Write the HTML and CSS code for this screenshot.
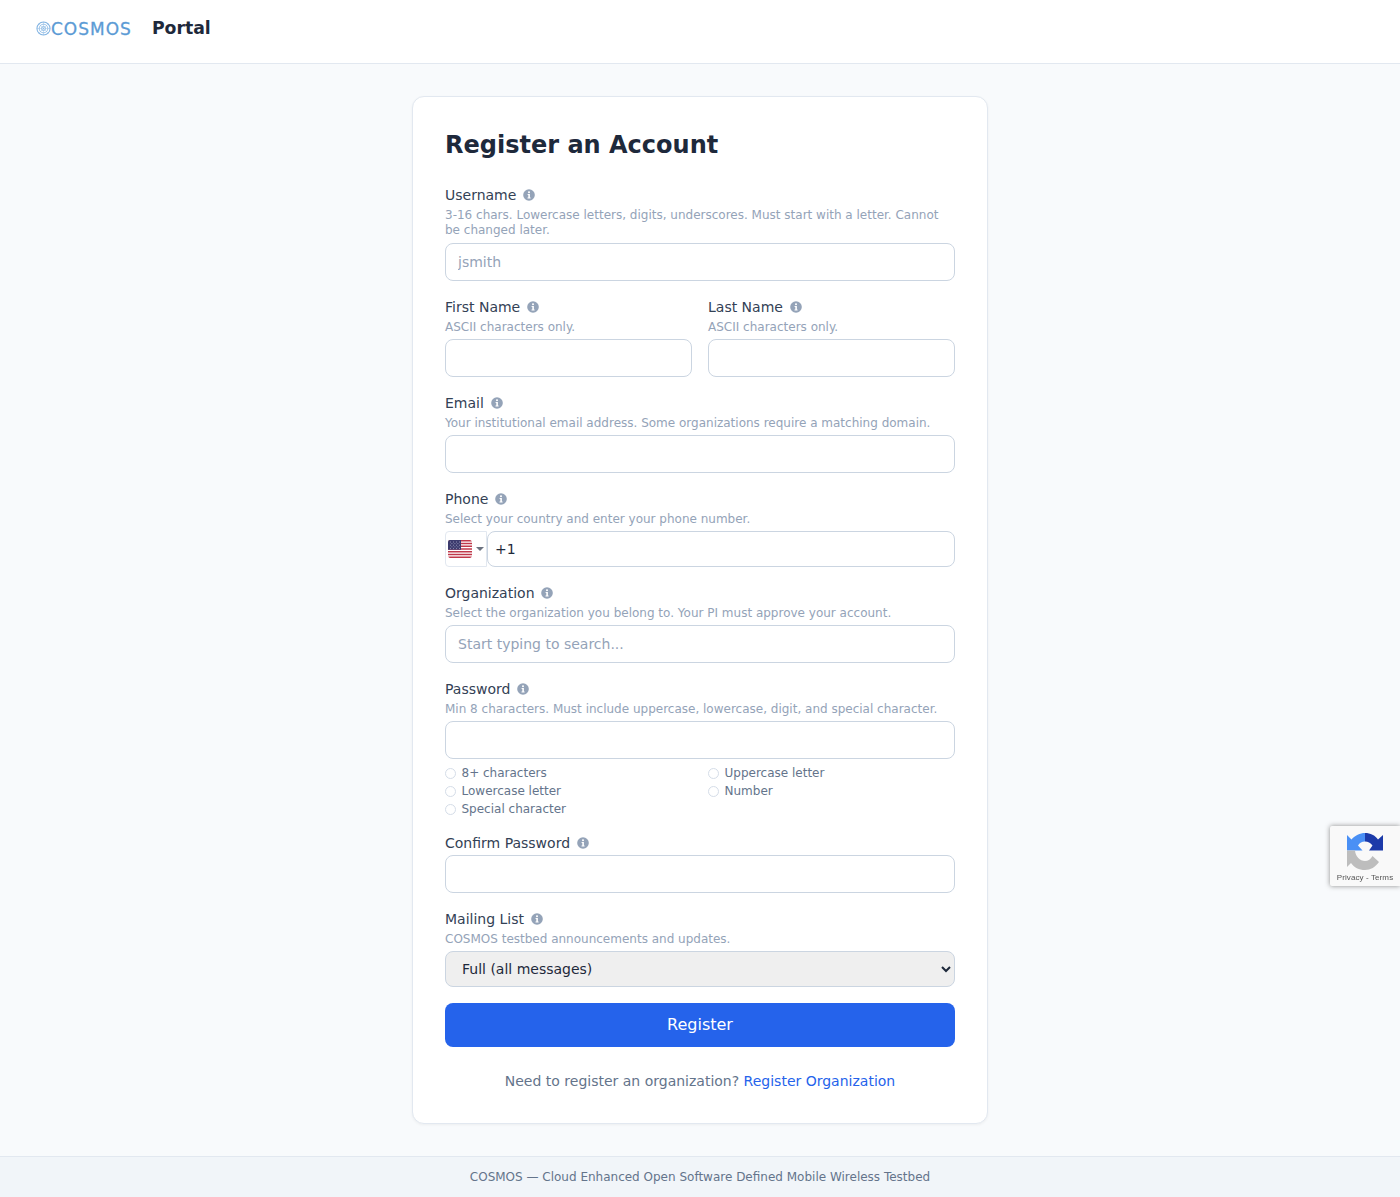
FILE: index.html
```html
<!DOCTYPE html>
<html>
<head>
    <title>COSMOS Portal - Register</title>
    <link rel="stylesheet" href="styles.css">
</head>
<body>
    <svg class="icon-defs" width="0" height="0">
        <symbol id="info" viewBox="0 0 12 12">
            <circle cx="6" cy="6" r="5.8" fill="#94a3b8" />
            <rect x="5.1" y="2.4" width="1.8" height="1.7" fill="#fff" />
            <path d="M4.6 5h2.3v3.5h.7v1H4.5v-1h.8V6h-.7z" fill="#fff" />
        </symbol>
    </svg>

    <nav class="navbar">
        <a class="brand" href="#">
            <svg class="brand-mark" viewBox="0 0 16 16" width="15" height="15" fill="none" stroke="#7fb2e2">
                <circle cx="8" cy="8" r="7" stroke-width="1.1" />
                <circle cx="8" cy="8" r="4.6" stroke-width=".8" />
                <circle cx="8" cy="8" r="2.2" stroke-width=".8" />
                <path d="M8 1v14M1 8h14M3 3l10 10M13 3L3 13" stroke-width=".4" />
            </svg>
            <span class="brand-text">COSMOS</span>
        </a>
        <span class="nav-title">Portal</span>
    </nav>

    <main class="page">
        <form class="card" id="registrationForm">
            <h1 class="card-title">Register an Account</h1>

            <div class="field">
                <label class="field-label">Username <svg class="info"><use href="#info" /></svg></label>
                <p class="hint hint-long">3-16 chars. Lowercase letters, digits, underscores. Must start with a letter. Cannot be changed later.</p>
                <input class="text-input" type="text" name="username" placeholder="jsmith">
            </div>

            <div class="field two-col">
                <div>
                    <label class="field-label">First Name <svg class="info"><use href="#info" /></svg></label>
                    <p class="hint">ASCII characters only.</p>
                    <input class="text-input" type="text" name="firstname">
                </div>
                <div>
                    <label class="field-label">Last Name <svg class="info"><use href="#info" /></svg></label>
                    <p class="hint">ASCII characters only.</p>
                    <input class="text-input" type="text" name="lastname">
                </div>
            </div>

            <div class="field">
                <label class="field-label">Email <svg class="info"><use href="#info" /></svg></label>
                <p class="hint">Your institutional email address. Some organizations require a matching domain.</p>
                <input class="text-input" type="email" name="email">
            </div>

            <div class="field">
                <label class="field-label">Phone <svg class="info"><use href="#info" /></svg></label>
                <p class="hint">Select your country and enter your phone number.</p>
                <div class="phone-row">
                    <div class="flag-button">
                        <svg class="flag" viewBox="0 0 24 18" width="24" height="18">
                            <rect width="24" height="18" rx="2" fill="#fff" />
                            <path d="M2 0h20a2 2 0 0 1 1.8 1.4H.2A2 2 0 0 1 2 0zM0 2.8h24v1.4H0zM0 5.5h24v1.4H0zM0 8.3h24v1.4H0zM0 11.1h24v1.4H0zM0 13.8h24v1.4H0zM.2 16.6h23.6A2 2 0 0 1 22 18H2a2 2 0 0 1-1.8-1.4z" fill="#c0394b" />
                            <path d="M2 0h11v9.7H0V2a2 2 0 0 1 2-2z" fill="#3c3b6e" />
                            <path d="M2 2h.8M5 2h.8M8 2h.8M11 2h.8M3.5 3.6h.8M6.5 3.6h.8M9.5 3.6h.8M2 5.2h.8M5 5.2h.8M8 5.2h.8M11 5.2h.8M3.5 6.8h.8M6.5 6.8h.8M9.5 6.8h.8M2 8.4h.8M5 8.4h.8M8 8.4h.8M11 8.4h.8" stroke="#b9bcd6" stroke-width=".8" />
                        </svg>
                        <span class="caret"></span>
                    </div>
                    <input class="text-input phone-input" type="tel" name="phone" value="+1">
                </div>
            </div>

            <div class="field">
                <label class="field-label">Organization <svg class="info"><use href="#info" /></svg></label>
                <p class="hint">Select the organization you belong to. Your PI must approve your account.</p>
                <input class="text-input" type="text" name="organization" placeholder="Start typing to search...">
            </div>

            <div class="field">
                <label class="field-label">Password <svg class="info"><use href="#info" /></svg></label>
                <p class="hint">Min 8 characters. Must include uppercase, lowercase, digit, and special character.</p>
                <input class="text-input" type="password" name="password">
                <ul class="rules">
                    <li>8+ characters</li>
                    <li>Uppercase letter</li>
                    <li>Lowercase letter</li>
                    <li>Number</li>
                    <li>Special character</li>
                </ul>
            </div>

            <div class="field">
                <label class="field-label">Confirm Password <svg class="info"><use href="#info" /></svg></label>
                <input class="text-input" type="password" name="confirm_password">
            </div>

            <div class="field">
                <label class="field-label">Mailing List <svg class="info"><use href="#info" /></svg></label>
                <p class="hint">COSMOS testbed announcements and updates.</p>
                <select class="select-input" name="mailing">
                    <option>Full (all messages)</option>
                    <option>Digest</option>
                    <option>None</option>
                </select>
            </div>

            <button class="submit-button" type="submit">Register</button>

            <p class="card-foot">Need to register an organization? <a href="#">Register Organization</a></p>
        </form>
    </main>

    <footer class="footer">COSMOS — Cloud Enhanced Open Software Defined Mobile Wireless Testbed</footer>

    <div class="recaptcha">
        <svg viewBox="0 0 40 40" width="40" height="40">
            <path d="M20 1V9.500C17 9.500 14.500 11 13 13.500L17.500 18.500H2V3L6.500 7.500C10 3.500 15 1 20 1Z" fill="#4a90f5" />
            <path d="M20 1C25.500 1 30 3.200 33 7.500L38 3V18.500H24L27.500 13.500C25.500 11 23 9.500 20 9.500Z" fill="#1c3aa9" />
            <path d="M2 18.500H10C10.500 24.500 15 29 20 29C23 29 26 27 27.500 24L34 30C30.500 35 25.500 38 20 38C14 38 9 35.500 6 31L2 35Z" fill="#bdbdbd" />
        </svg>
        <span class="recaptcha-links">Privacy - Terms</span>
    </div>
</body>
</html>
```

FILE: styles.css
```css
* {
    box-sizing: border-box;
}

html,
body {
    height: 100%;
}

body {
    margin: 0;
    display: flex;
    flex-direction: column;
    background: #f8fafc;
    color: #1e293b;
    font-family: "DejaVu Sans", sans-serif;
    font-size: 14px;
}

.icon-defs {
    position: absolute;
}

.navbar {
    display: flex;
    align-items: center;
    gap: 20px;
    height: 64px;
    padding: 0 36px 8px;
    background: #fff;
    border-bottom: 1px solid #e2e8f0;
}

.brand {
    display: flex;
    align-items: center;
    text-decoration: none;
    margin-top: 2px;
}

.brand-text {
    color: #5b9bd5;
    font-size: 17px;
    line-height: 20px;
    letter-spacing: 1px;
    -webkit-text-stroke: 0.3px #5b9bd5;
}

.nav-title {
    font-size: 17.3px;
    font-weight: 700;
    color: #1e293b;
}

.page {
    flex: 1;
    display: flex;
    justify-content: center;
    align-items: flex-start;
    padding: 32px 0;
}

.card {
    width: 576px;
    padding: 32px;
    background: #fff;
    border: 1px solid #e2e8f0;
    border-radius: 12px;
    box-shadow: 0 1px 3px rgba(0, 0, 0, 0.05);
}

.card-title {
    margin: 0 0 24px;
    font-size: 24px;
    line-height: 32px;
    font-weight: 700;
    color: #1e293b;
}

.field {
    margin-bottom: 16px;
}

.two-col {
    display: grid;
    grid-template-columns: 1fr 1fr;
    gap: 16px;
}

.field-label {
    display: block;
    margin-bottom: 2px;
    font-size: 14px;
    line-height: 20px;
    color: #334155;
}

.info {
    width: 12px;
    height: 12px;
    margin-left: 2.500px;
    vertical-align: -1px;
}

.hint {
    margin: 0 0 3.400px;
    padding-top: 1px;
    font-size: 12px;
    line-height: 15.600px;
    color: #94a3b8;
}

.hint-long {
    margin-bottom: 5.500px;
    padding-top: 0.500px;
    line-height: 15px;
}

.text-input {
    display: block;
    width: 100%;
    height: 38px;
    padding: 0 12px;
    border: 1px solid #cbd5e1;
    border-radius: 8px;
    background: #fff;
    color: #1e293b;
    font-family: inherit;
    font-size: 14px;
}

.text-input::placeholder {
    color: #94a3b8;
}

.phone-row {
    display: flex;
}

.flag-button {
    display: flex;
    align-items: center;
    gap: 4px;
    width: 42px;
    height: 36px;
    padding-left: 2px;
    border: 1px solid #e2e8f0;
    border-radius: 4px 0 0 4px;
}

.caret {
    width: 0;
    height: 0;
    border-left: 4px solid transparent;
    border-right: 4px solid transparent;
    border-top: 4px solid #6b7280;
}

.phone-input {
    flex: 1;
    height: 36px;
    padding-left: 7px;
}

.rules {
    display: grid;
    grid-template-columns: 1fr 1fr;
    column-gap: 16px;
    margin: 5px 0 -1px;
    padding: 0;
    list-style: none;
}

.rules li {
    display: flex;
    align-items: center;
    gap: 5.500px;
    font-size: 12px;
    line-height: 18px;
    color: #64748b;
}

.rules li::before {
    content: "";
    width: 9px;
    height: 9px;
    margin-top: 2px;
    border: 1px solid #d5dde8;
    border-radius: 50%;
}

.select-input {
    display: block;
    width: 100%;
    height: 36px;
    padding: 0 12px;
    border: 1px solid #cbd5e1;
    border-radius: 8px;
    background-color: #efefef;
    color: #1e293b;
    font-family: inherit;
    font-size: 14px;
}

.submit-button {
    display: block;
    width: 100%;
    height: 44px;
    padding: 0 0 1px;
    border: none;
    border-radius: 8px;
    background: #2563eb;
    color: #fff;
    font-family: inherit;
    font-size: 16px;
    cursor: pointer;
}

.card-foot {
    margin: 24px 0 0;
    text-align: center;
    font-size: 14px;
    line-height: 20px;
    color: #64748b;
}

.card-foot a {
    color: #2563eb;
    text-decoration: none;
}

.footer {
    height: 41px;
    padding-top: 12px;
    background: #f1f5f9;
    border-top: 1px solid #e2e8f0;
    text-align: center;
    font-size: 12px;
    line-height: 16px;
    color: #64748b;
}

.recaptcha {
    position: fixed;
    left: 1330px;
    top: 826px;
    width: 70px;
    height: 60px;
    display: flex;
    flex-direction: column;
    align-items: center;
    background: #f9f9f9;
    border-radius: 2px 0 0 2px;
    box-shadow: 0 0 5px rgba(128, 128, 128, 0.9);
    font-family: "Liberation Sans", sans-serif;
}

.recaptcha svg {
    margin-top: 6px;
}

.recaptcha-links {
    font-size: 8px;
    line-height: 10px;
    margin-top: 1px;
    letter-spacing: 0.1px;
    color: #555;
    white-space: nowrap;
}
```
